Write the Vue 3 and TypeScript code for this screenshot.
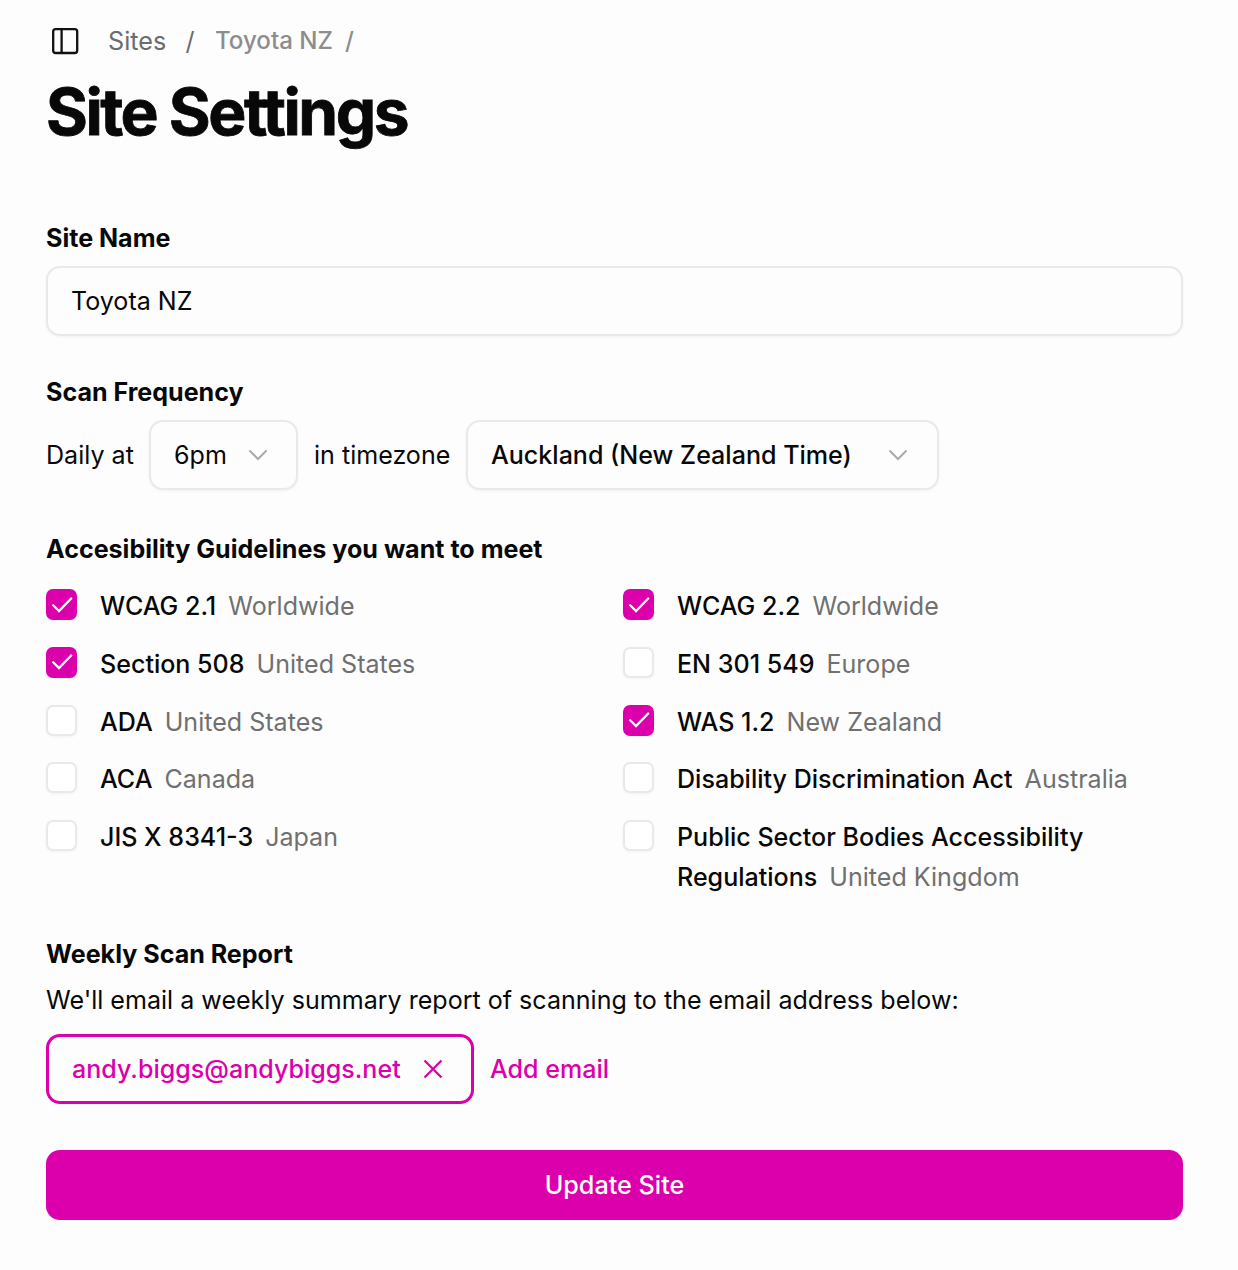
<script setup lang="ts">
interface Guideline { name: string; region: string; checked: boolean }
const left: Guideline[] = [
  { name: 'WCAG 2.1', region: 'Worldwide', checked: true },
  { name: 'Section 508', region: 'United States', checked: true },
  { name: 'ADA', region: 'United States', checked: false },
  { name: 'ACA', region: 'Canada', checked: false },
  { name: 'JIS X 8341-3', region: 'Japan', checked: false },
]
const right: Guideline[] = [
  { name: 'WCAG 2.2', region: 'Worldwide', checked: true },
  { name: 'EN 301 549', region: 'Europe', checked: false },
  { name: 'WAS 1.2', region: 'New Zealand', checked: true },
  { name: 'Disability Discrimination Act', region: 'Australia', checked: false },
  { name: 'Public Sector Bodies Accessibility Regulations', region: 'United Kingdom', checked: false },
]
</script>

<template>
  <main class="page">
    <nav class="crumbs">
      <svg class="panel" width="28" height="28" viewBox="0 0 28 28" fill="none" stroke="#111" stroke-width="2.3"><rect x="2.2" y="2.2" width="24" height="23.8" rx="2.5" /><path d="M10.600 2v24" /></svg>
      <span class="c1">Sites</span><span class="s1">/</span><span class="c2">Toyota NZ</span><span class="s2">/</span>
    </nav>
    <h1>Site Settings</h1>
    <h2 class="name-label">Site Name</h2>
    <div class="field">Toyota NZ</div>
    <h2 class="freq-label">Scan Frequency</h2>
    <div class="freq">
      <span class="daily">Daily at</span>
      <div class="select hour"><span>6pm</span><svg width="20" height="12" viewBox="0 0 20 12"><path d="M2 2 10 10l8-8" /></svg></div>
      <span class="tz">in timezone</span>
      <div class="select zone"><span>Auckland (New Zealand Time)</span><svg width="20" height="12" viewBox="0 0 20 12"><path d="M2 2 10 10l8-8" /></svg></div>
    </div>
    <h2 class="guide-label">Accesibility Guidelines you want to meet</h2>
    <div class="columns">
      <div v-for="(col, i) in [left, right]" :key="i" class="column">
        <div v-for="g in col" :key="g.name" class="item">
          <span class="box" :class="{ on: g.checked }"><svg v-if="g.checked" width="22" height="16" viewBox="0 0 22 16"><path d="M2.200 8.300 8 14 20.200 1.500" /></svg></span>
          <p><span class="name">{{ g.name }}</span><span class="region">{{ g.region }}</span></p>
        </div>
      </div>
    </div>
    <h2 class="report-label">Weekly Scan Report</h2>
    <p class="desc">We'll email a weekly summary report of scanning to the email address below:</p>
    <div class="emails">
      <div class="chip"><span>andy.biggs@andybiggs.net</span><svg width="20" height="20" viewBox="0 0 20 20"><path d="M1.500 1.500l17 17M18.500 1.500l-17 17" /></svg></div>
      <span class="add">Add email</span>
    </div>
    <button class="submit">Update Site</button>
  </main>
</template>

<style>
body { background: #fdfdfd; }
</style>
<style scoped>
.page { box-sizing: border-box; width: 1238px; height: 1270px; padding: 24px 55px 0 46px; overflow: hidden; font: 400 25.07px/36px Inter, sans-serif; color: #080808; background: #fdfdfd; }
h1, h2, p { margin: 0; }
.crumbs { display: flex; align-items: center; height: 34px; color: #6c6c6c; font-size: 25.2px; white-space: nowrap; }
.panel { margin-left: 5px; }
.c1 { width: 58px; margin-left: 29px; }
.s1 { width: 9px; margin-left: 19.5px; }
.c2 { width: 117px; margin-left: 20.5px; color: #8d8d8d; font-size: 24.1px; font-weight: 500; }
.s2 { margin-left: 13px; color: #8d8d8d; font-size: 24.1px; font-weight: 500; }
h1 { margin-top: 15px; font-size: 64px; line-height: 78px; font-weight: 700; letter-spacing: -2.5px; -webkit-text-stroke: 0.8px #080808; white-space: nowrap; }
h2 { font-size: 25.07px; line-height: 36px; font-weight: 700; white-space: nowrap; }
.name-label { margin-top: 69px; }
.field, .select { box-sizing: border-box; height: 70px; border: 2px solid #e9e9e9; border-radius: 14px; box-shadow: 0 1px 3px #0000000c; display: flex; align-items: center; }
.field { margin-top: 10px; padding-left: 23px; }
.freq-label { margin-top: 38px; }
.freq { display: flex; align-items: center; margin-top: 10px; white-space: nowrap; }
.daily { width: 103px; }
.select { justify-content: space-between; padding: 0 28px 0 23px; font-weight: 500; }
.select svg { fill: none; stroke: #aaa; stroke-width: 2; stroke-linecap: round; }
.hour { width: 149px; font-weight: 400; }
.tz { width: 152px; margin-left: 16px; }
.zone { width: 473px; padding-right: 29px; }
.guide-label { margin-top: 41px; }
.columns { display: flex; margin-top: 20px; height: 308px; }
.column { width: 577px; }
.column + .column { width: 560px; }
.item { display: flex; margin-bottom: 17.8px; }
.item p { width: 480px; margin: -1px 0 0 23px; line-height: 40px; }
.item:not(:last-child) { height: 40px; }
.item:not(:last-child) p { white-space: nowrap; }
.name { font-weight: 500; margin-right: 12px; }
.region { color: #707070; }
.box { box-sizing: border-box; flex: none; width: 31px; height: 31px; margin-top: 2px; border: 2px solid #e9e9e9; border-radius: 7px; background: #fff; box-shadow: 0 1px 3px #0000000c; display: flex; align-items: center; justify-content: center; }
.box.on { background: #db00ab; border-color: #db00ab; }
.box svg { fill: none; stroke: #fff; stroke-width: 2.3; stroke-linecap: round; flex: none; }
.report-label { margin-top: 41px; }
.desc { margin-top: 10px; white-space: nowrap; }
.emails { display: flex; align-items: center; margin-top: 16px; color: #db00ab; font-weight: 500; }
.chip { box-sizing: border-box; display: flex; align-items: center; justify-content: space-between; width: 428px; height: 70px; border: 3px solid #db00ab; border-radius: 14px; padding: 0 28.5px 0 23px; }
.chip svg { stroke: #db00ab; stroke-width: 2.3; fill: none; }
.add { margin-left: 16px; white-space: nowrap; }
.submit { display: block; width: 1137px; height: 70px; margin-top: 46px; border: 0; border-radius: 14px; background: #db00ab; color: #fff; font: 500 25.2px/36px Inter, sans-serif; }
</style>
